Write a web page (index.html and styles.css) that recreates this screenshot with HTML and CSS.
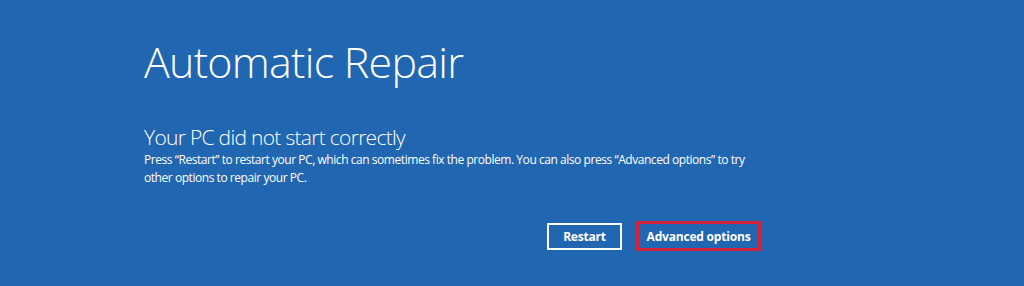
FILE: index.html
```html
<!DOCTYPE html>
<html>
<head>
<meta charset="utf-8">
<link rel="stylesheet" href="styles.css">
</head>
<body>
<main class="screen">
  <h1 class="title">Automatic Repair</h1>
  <h2 class="subtitle">Your PC did not start correctly</h2>
  <p class="desc">Press “Restart” to restart your PC, which can sometimes fix the problem. You can also press “Advanced options” to try other options to repair your PC.</p>
  <div class="actions">
    <button class="btn btn-restart">Restart</button>
    <button class="btn btn-advanced">Advanced options</button>
  </div>
</main>
</body>
</html>
```
FILE: styles.css
```css
html, body {
  margin: 0;
  padding: 0;
  background: #2166b0;
  width: 1024px;
  height: 286px;
  overflow: hidden;
}
.screen {
  box-sizing: border-box;
  padding: 32px 0 0 144px;
  width: 1024px;
  height: 286px;
  color: #ffffff;
  font-family: "Open Sans", "Noto Sans", sans-serif;
}
.title {
  margin: 0;
  font-weight: 300;
  font-size: 43px;
  line-height: 60px;
  letter-spacing: -0.75px;
}
.subtitle {
  margin: 31px 0 0 0;
  font-weight: 300;
  font-size: 21px;
  line-height: 28px;
  letter-spacing: -0.7px;
}
.desc {
  margin: 0;
  width: 610px;
  font-size: 12px;
  line-height: 18px;
  font-weight: 400;
  letter-spacing: -0.45px;
}
.actions {
  display: flex;
  gap: 14px;
  margin: 34px 0 0 403px;
  align-items: center;
}
.btn {
  box-sizing: border-box;
  font-family: "Open Sans", "Noto Sans", sans-serif;
  font-weight: 700;
  font-size: 12px;
  letter-spacing: -0.2px;
  color: #ffffff;
  background: transparent;
  padding: 0;
  cursor: pointer;
}
.btn-restart {
  width: 75px;
  height: 27px;
  border: 2px solid #ffffff;
}
.btn-advanced {
  width: 125px;
  height: 30px;
  border: 3px solid #d0233a;
}
```
